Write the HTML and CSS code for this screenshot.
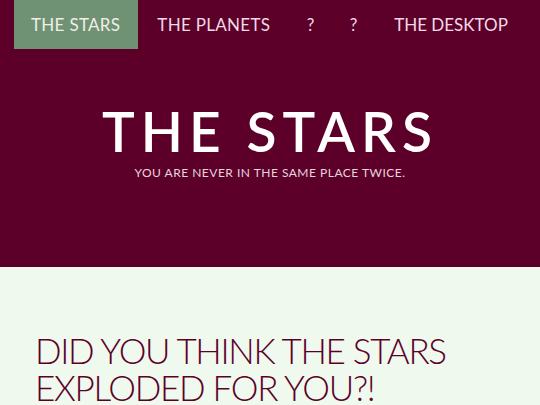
FILE: index.html
```html
<!DOCTYPE html>
<html>
<head>
<meta charset="utf-8">
<link rel="stylesheet" href="styles.css">
</head>
<body>
<header class="hero">
  <nav class="nav">
    <a class="nav-item active">THE STARS</a>
    <a class="nav-item">THE PLANETS</a>
    <a class="nav-item narrow">?</a>
    <a class="nav-item narrow">?</a>
    <a class="nav-item tight">THE DESKTOP</a>
  </nav>
  <div class="hero-body">
    <h1 class="title">THE STARS</h1>
    <p class="subtitle">YOU ARE NEVER IN THE SAME PLACE TWICE.</p>
  </div>
</header>
<main class="content">
  <h2 class="heading">DID YOU THINK THE STARS EXPLODED FOR YOU?!</h2>
</main>
</body>
</html>
```
FILE: styles.css
```css
* { box-sizing: border-box; }
html, body { margin: 0; padding: 0; }
body {
  font-family: Lato, "Open Sans", sans-serif;
  background: #eff9ee;
  overflow: hidden;
  height: 405px;
}
.hero {
  background: #5c0029;
  height: 267px;
}
.nav {
  display: flex;
  padding-left: 14px;
  height: 49px;
}
.nav-item {
  display: flex;
  align-items: center;
  flex-shrink: 0;
  white-space: nowrap;
  padding: 0 19px;
  font-size: 17px;
  letter-spacing: 0.3px;
  color: #f2d9e6;
}
.nav-item.narrow {
  padding: 0 17.5px;
}
.nav-item.tight {
  letter-spacing: 0;
}
.nav-item.active {
  padding: 0 18px 0 17px;
  background: #6f9174;
  color: #f1efe3;
}
.hero-body {
  display: flex;
  flex-direction: column;
  align-items: center;
  padding-top: 52px;
}
.title {
  margin: 0;
  font-size: 55px;
  font-weight: 600;
  letter-spacing: 6px;
  line-height: 60px;
  color: #ffffff;
}
.subtitle {
  margin: 4px 0 0;
  font-size: 12px;
  letter-spacing: 0.5px;
  color: #e9d3df;
}
.content {
  padding: 65px 35px 0;
}
.heading {
  margin: 0;
  font-size: 35px;
  font-weight: 300;
  letter-spacing: -1.3px;
  line-height: 37px;
  color: #5c0029;
  max-width: 470px;
}
```
